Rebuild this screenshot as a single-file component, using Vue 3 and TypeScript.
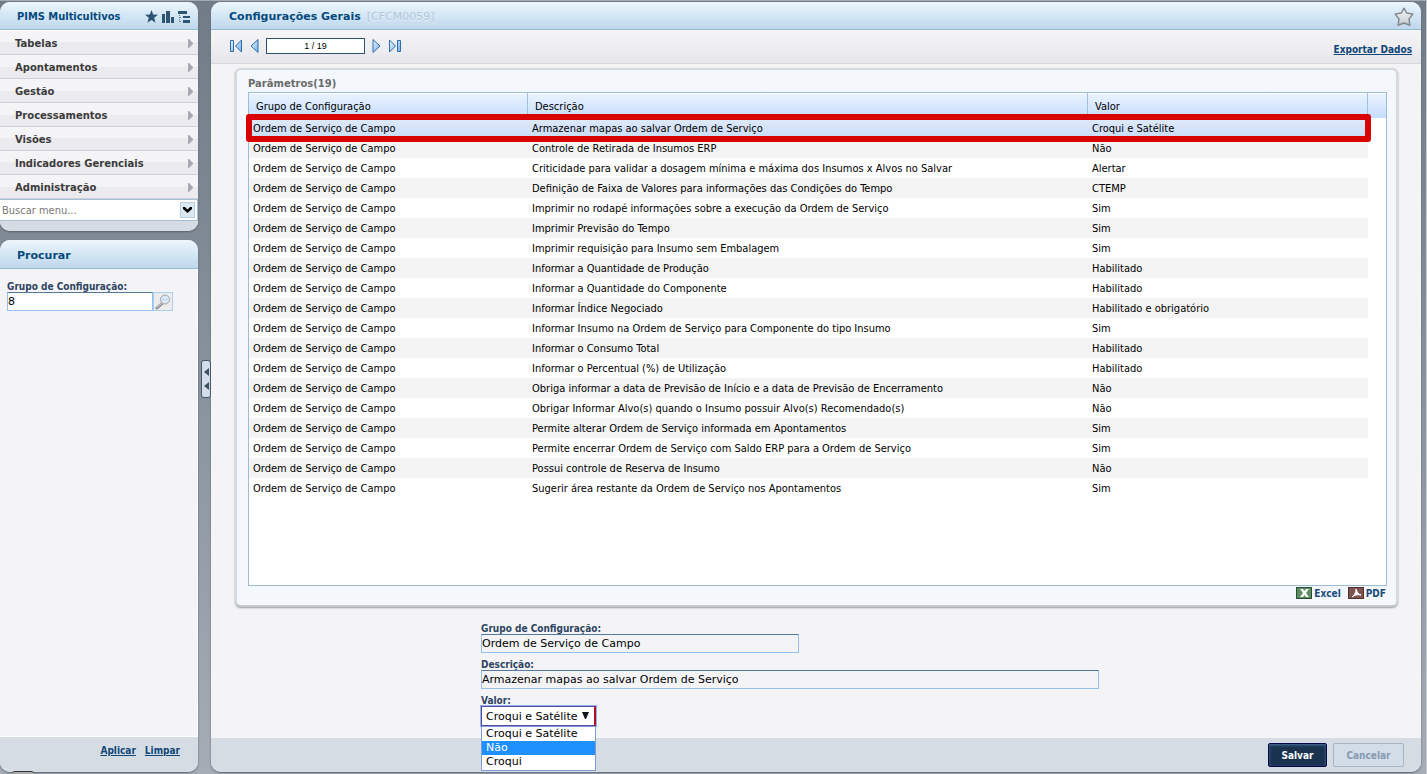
<script setup lang="ts">
import { ref } from 'vue'

interface Parametro {
  descricao: string
  valor: string
}

const menus: string[] = [
  'Tabelas',
  'Apontamentos',
  'Gestão',
  'Processamentos',
  'Visões',
  'Indicadores Gerenciais',
  'Administração',
]

const grupo = 'Ordem de Serviço de Campo'

const parametros: Parametro[] = [
  { descricao: 'Armazenar mapas ao salvar Ordem de Serviço', valor: 'Croqui e Satélite' },
  { descricao: 'Controle de Retirada de Insumos ERP', valor: 'Não' },
  { descricao: 'Criticidade para validar a dosagem mínima e máxima dos Insumos x Alvos no Salvar', valor: 'Alertar' },
  { descricao: 'Definição de Faixa de Valores para informações das Condições do Tempo', valor: 'CTEMP' },
  { descricao: 'Imprimir no rodapé informações sobre a execução da Ordem de Serviço', valor: 'Sim' },
  { descricao: 'Imprimir Previsão do Tempo', valor: 'Sim' },
  { descricao: 'Imprimir requisição para Insumo sem Embalagem', valor: 'Sim' },
  { descricao: 'Informar a Quantidade de Produção', valor: 'Habilitado' },
  { descricao: 'Informar a Quantidade do Componente', valor: 'Habilitado' },
  { descricao: 'Informar Índice Negociado', valor: 'Habilitado e obrigatório' },
  { descricao: 'Informar Insumo na Ordem de Serviço para Componente do tipo Insumo', valor: 'Sim' },
  { descricao: 'Informar o Consumo Total', valor: 'Habilitado' },
  { descricao: 'Informar o Percentual (%) de Utilização', valor: 'Habilitado' },
  { descricao: 'Obriga informar a data de Previsão de Início e a data de Previsão de Encerramento', valor: 'Não' },
  { descricao: 'Obrigar Informar Alvo(s) quando o Insumo possuir Alvo(s) Recomendado(s)', valor: 'Não' },
  { descricao: 'Permite alterar Ordem de Serviço informada em Apontamentos', valor: 'Sim' },
  { descricao: 'Permite encerrar Ordem de Serviço com Saldo ERP para a Ordem de Serviço', valor: 'Sim' },
  { descricao: 'Possui controle de Reserva de Insumo', valor: 'Não' },
  { descricao: 'Sugerir área restante da Ordem de Serviço nos Apontamentos', valor: 'Sim' },
]

const opcoes: string[] = ['Croqui e Satélite', 'Não', 'Croqui']
const destacada = ref('Não')
const selecionado = ref(0)
const busca = ref('')
const filtro = ref('8')
const pagina = ref('1 / 19')
const descricao = ref(parametros[0].descricao)
const valor = ref(parametros[0].valor)

function selecionar(i: number): void {
  selecionado.value = i
  descricao.value = parametros[i].descricao
}
</script>

<template>
  <div class="app">
    <svg width="0" height="0" class="defs" aria-hidden="true">
      <defs>
        <linearGradient id="azul" x1="0" y1="0" x2="1" y2="1">
          <stop offset="0" stop-color="#e4f2fd" />
          <stop offset="1" stop-color="#78b0ea" />
        </linearGradient>
        <linearGradient id="prata" x1="0" y1="0" x2="0" y2="1">
          <stop offset="0" stop-color="#f4f6f8" />
          <stop offset="1" stop-color="#c4cbd3" />
        </linearGradient>
      </defs>
    </svg>

    <aside class="side">
      <nav class="panel">
        <header class="head side-head">
          <h2 class="brand">PIMS Multicultivos</h2>
          <span class="tools">
            <button type="button" class="icon" aria-label="Favoritos">
              <svg width="13" height="13" viewBox="0 0 13 13"><path d="M6.5 0 8.2 4.6 13 4.8 9.2 7.8 10.6 12.7 6.5 9.9 2.4 12.7 3.8 7.8 0 4.8 4.8 4.6Z" fill="#2c5572" /></svg>
            </button>
            <button type="button" class="icon" aria-label="Gráficos">
              <svg width="12" height="12" viewBox="0 0 12 12"><path d="M0 3h3v9H0ZM4 0h4v12H4ZM9 6h3v6H9Z" fill="#2c5572" /></svg>
            </button>
            <button type="button" class="icon" aria-label="Árvore">
              <svg width="12" height="12" viewBox="0 0 12 12"><path d="M0 0h9v3H0ZM5 5h7v2H5ZM5 9h7v3H5Z" fill="#2c5572" /><path d="M1.5 4v7M2 6.500h2M2 10.500h2" stroke="#5b7c94" stroke-dasharray="1 1" fill="none" /></svg>
            </button>
          </span>
        </header>
        <ul class="menu">
          <li v-for="m in menus" :key="m">
            <a href="#" class="menu-item">
              <span>{{ m }}</span>
              <svg width="5" height="9" viewBox="0 0 5 9"><path d="M0 0h1l4 4v1L1 9H0Z" fill="#a9a9b3" /></svg>
            </a>
          </li>
        </ul>
        <div class="combo">
          <input v-model="busca" type="text" placeholder="Buscar menu..." aria-label="Buscar menu" />
          <button type="button" aria-label="Abrir lista">
            <svg width="9" height="6" viewBox="0 0 9 6"><path d="M0 0h2l2.500 2.500L7 0h2v2L4.500 6 0 2Z" fill="#000" /></svg>
          </button>
        </div>
        <div class="cap"></div>
      </nav>

      <section class="panel find">
        <header class="head side-head"><h2>Procurar</h2></header>
        <div class="find-body">
          <label for="filtro" class="label">Grupo de Configuração:</label>
          <div class="lookup">
            <input id="filtro" v-model="filtro" type="text" class="field" />
            <button type="button" aria-label="Pesquisar">
              <svg width="17" height="16" viewBox="0 0 17 16">
                <path d="M7 9.500 2 14" stroke="#8d8d8d" stroke-width="3" stroke-linecap="round" />
                <path d="M6.500 9.500 2.500 13" stroke="#dedede" stroke-linecap="round" />
                <circle cx="10" cy="5.500" r="4.500" fill="#dbe9f8" stroke="#a3a3a3" />
                <path d="M7 5.500h6" stroke="#b9d3ee" />
              </svg>
            </button>
          </div>
        </div>
        <footer class="find-foot">
          <a href="#" class="link">Aplicar</a>
          <a href="#" class="link">Limpar</a>
        </footer>
      </section>
    </aside>

    <div class="splitter">
      <button type="button" aria-label="Recolher menu">
        <svg width="5" height="22" viewBox="0 0 5 22"><path d="M5 0v8L0 4ZM5 14v8L0 18Z" fill="#3e5064" /></svg>
      </button>
    </div>

    <main class="panel main">
      <header class="head main-head">
        <h1>Configurações Gerais</h1>
        <span class="code">[CFCM0059]</span>
        <button type="button" class="icon fav" aria-label="Adicionar aos favoritos">
          <svg width="20" height="20" viewBox="0 0 20 20"><path d="M10 1.200 12.600 6 18.800 7.100 15 12 15.900 18.300 10 16 4.100 18.300 5 12 1.200 7.100 7.400 6Z" fill="url(#prata)" stroke="#86898d" stroke-width="1.500" stroke-linejoin="round" /></svg>
        </button>
      </header>

      <div class="bar">
        <div class="pager">
          <button type="button" class="icon" aria-label="Primeiro">
            <svg width="13" height="14" viewBox="0 0 13 14"><path d="M.5 1.500h3v11h-3ZM11.500 1v12L5.500 7Z" fill="url(#azul)" stroke="#2f6cab" /></svg>
          </button>
          <button type="button" class="icon" aria-label="Anterior">
            <svg width="9" height="14" viewBox="0 0 9 14"><path d="M8 .5v13L1 7Z" fill="url(#azul)" stroke="#2f6cab" /></svg>
          </button>
          <input v-model="pagina" type="text" aria-label="Registro" />
          <button type="button" class="icon" aria-label="Próximo">
            <svg width="9" height="14" viewBox="0 0 9 14"><path d="M1 .5v13L8 7Z" fill="url(#azul)" stroke="#2f6cab" /></svg>
          </button>
          <button type="button" class="icon" aria-label="Último">
            <svg width="13" height="14" viewBox="0 0 13 14"><path d="M9.500 1.500h3v11h-3ZM1.500 1v12L7.500 7Z" fill="url(#azul)" stroke="#2f6cab" /></svg>
          </button>
        </div>
        <a href="#" class="link">Exportar Dados</a>
      </div>

      <div class="content">
        <section class="group">
          <h3>Parâmetros(19)</h3>
          <div class="grid">
            <table>
              <colgroup>
                <col class="c1" />
                <col />
                <col class="c3" />
                <col class="c4" />
              </colgroup>
              <thead>
                <tr>
                  <th scope="col">Grupo de Configuração</th>
                  <th scope="col">Descrição</th>
                  <th scope="col">Valor</th>
                  <td></td>
                </tr>
              </thead>
              <tbody>
                <tr v-for="(p, i) in parametros" :key="p.descricao" :class="{ on: i === selecionado }" @click="selecionar(i)">
                  <td>{{ grupo }}</td>
                  <td>{{ p.descricao }}</td>
                  <td>{{ p.valor }}</td>
                </tr>
              </tbody>
            </table>
            <div class="marker"></div>
          </div>
          <div class="exports">
            <a href="#">
              <svg width="16" height="12" viewBox="0 0 16 12"><rect x=".5" y=".5" width="15" height="11" fill="#5c8c5f" stroke="#2b4f35" /><path d="M4 2h3l1.500 2L10 2h3l-3 4 3 4h-3L8.500 8 7 10H4l3-4Z" fill="#fff" /></svg>
              Excel
            </a>
            <a href="#">
              <svg width="16" height="12" viewBox="0 0 16 12"><rect x=".5" y=".5" width="15" height="11" fill="#7d5450" stroke="#54302f" /><path d="M8 2c1 3 2 5 5 6-3-.500-6-.500-9 2 3-2 4-5 4-8Z" fill="#fff" stroke="#fff" stroke-linejoin="round" /></svg>
              PDF
            </a>
          </div>
        </section>

        <form class="form" @submit.prevent>
          <label for="grupo" class="label">Grupo de Configuração:</label>
          <input id="grupo" type="text" class="field short" :value="grupo" readonly />
          <label for="descricao" class="label">Descrição:</label>
          <input id="descricao" type="text" class="field" :value="descricao" readonly />
          <label for="valor" class="label">Valor:</label>
          <div class="select">
            <select id="valor" v-model="valor">
              <option v-for="o in opcoes" :key="o">{{ o }}</option>
            </select>
            <svg class="arrow" width="7" height="7" viewBox="0 0 7 7"><path d="M0 0h7L4 7H3Z" fill="#111" /></svg>
            <ul class="options" role="listbox" aria-label="Valor">
              <li v-for="o in opcoes" :key="o" role="option" :aria-selected="o === destacada" :class="{ hot: o === destacada }" @mouseenter="destacada = o" @click="valor = o">{{ o }}</li>
            </ul>
          </div>
        </form>
      </div>

      <footer class="main-foot">
        <button type="button" class="btn primary">Salvar</button>
        <button type="button" class="btn" disabled>Cancelar</button>
      </footer>
    </main>

    <div class="peek"></div>
  </div>
</template>

<style>
html,
body {
  margin: 0;
  background: #a4abb4;
}
</style>

<style scoped>
.app,
.app * {
  box-sizing: border-box;
}

.app {
  position: relative;
  display: flex;
  height: 100vh;
  min-height: 700px;
  padding: 1px 5px 2px 0;
  border-right: 1px solid #c9cccf;
  border-top: 1px solid #a3aab0;
  background: linear-gradient(#727c88, #7f8994 30%, #8e98a3 60%, #a5acb6);
  font-family: 'DejaVu Sans', Verdana, sans-serif;
  font-size: 11px;
  overflow: hidden;
}

.defs {
  position: absolute;
}

.peek {
  position: absolute;
  left: 12px;
  bottom: 0;
  width: 22px;
  height: 3px;
  border-top: 1px solid #333;
  border-radius: 11px 11px 0 0;
  background: #a9aca8;
}

button,
input,
select {
  font: inherit;
  margin: 0;
  padding: 0;
}

h1,
h2,
h3,
ul {
  margin: 0;
  padding: 0;
}

ul {
  list-style: none;
}

svg {
  display: block;
  flex: none;
}

.icon {
  border: 0;
  background: none;
}

.panel {
  display: flex;
  flex-direction: column;
  border-radius: 10px;
  background: #f4f4f7;
  box-shadow: 0 1px 2px #59636e;
}

.head {
  display: flex;
  align-items: center;
  flex: none;
  height: 28px;
  border-bottom: 1px solid #92bdd0;
  border-radius: 10px 10px 0 0;
  background: linear-gradient(#edf6fc, #d6e8f5 45%, #bfd7ec);
  color: #064a7d;
}

h1,
h2 {
  font-size: 11px;
  font-weight: bold;
}

.side {
  display: flex;
  flex-direction: column;
  gap: 9px;
  flex: none;
  width: 198px;
}

.side-head {
  padding: 2px 8px 0 17px;
  justify-content: space-between;
}

.brand,
.label,
.link {
  font-family: 'DejaVu Sans Condensed', 'DejaVu Sans', sans-serif;
  font-stretch: condensed;
}

.tools {
  display: flex;
  align-items: center;
  gap: 4px;
}

.menu {
  border-top: 1px solid #fff;
}

.menu-item {
  display: flex;
  align-items: center;
  justify-content: space-between;
  height: 24px;
  padding: 2px 5px 0 15px;
  border-bottom: 1px solid #cfcfde;
  background: linear-gradient(#f4f4f6 50%, #ebebef 50%);
  color: #3b3b3b;
  font-size: 10px;
  font-weight: bold;
  text-decoration: none;
}

.combo {
  display: flex;
  align-items: center;
  height: 22px;
  padding: 0 2px;
  border: 1px solid #a3bfd4;
  border-left: 0;
  background: #fff;
}

.combo input {
  flex: 1;
  min-width: 0;
  border: 0;
  outline: 0;
  font-family: 'DejaVu Sans Condensed', 'DejaVu Sans', sans-serif;
  font-stretch: condensed;
}

.combo input::placeholder {
  color: #777;
}

.combo button {
  display: grid;
  place-items: center;
  width: 15px;
  height: 16px;
  border: 1px solid #b5cfe0;
  background: #dce9f2;
}

.cap {
  height: 10px;
  border-radius: 0 0 10px 10px;
  background: #d6dce4;
}

.find {
  flex: 1;
}

.find .head {
  height: 29px;
}

.find-body {
  flex: 1;
  padding: 12px 7px;
  border-right: 1px solid #fff;
  border-bottom: 1px solid #fff;
}

.label {
  display: block;
  height: 11px;
  line-height: 11px;
  color: #2f4562;
  font-size: 10px;
  font-weight: bold;
}

.field {
  display: block;
  width: 100%;
  height: 19px;
  padding: 0;
  border: 1px solid #94c1f2;
  border-top-color: #56789e;
  border-radius: 0;
  background: #fff;
  color: #000;
  outline: 0;
}

.lookup {
  display: flex;
  width: 166px;
}

.lookup button {
  display: grid;
  place-items: center;
  flex: none;
  width: 20px;
  border: 1px solid #a9cdf3;
  background: #ececec;
}

.find-foot {
  display: flex;
  gap: 9px;
  justify-content: flex-end;
  height: 35px;
  padding: 8px 18px 0 0;
  border-radius: 0 0 10px 10px;
  background: #d6dce4;
}

.link {
  color: #104777;
  font-size: 10px;
  font-weight: bold;
}

.splitter {
  display: flex;
  align-items: center;
  flex: none;
  width: 13px;
  padding-left: 3px;
}

.splitter button {
  display: grid;
  place-items: center;
  width: 10px;
  height: 38px;
  margin-bottom: 16px;
  border: 1px solid #44566a;
  border-radius: 3px;
  background: #d3deea;
}

.main {
  flex: 1;
  min-width: 0;
}

.main-head {
  gap: 6px;
  padding: 2px 7px 0 18px;
}

.code {
  color: #b0c6db;
  text-shadow: 0 1px #e9f2fa;
}

.fav {
  margin-left: auto;
}

.bar {
  display: flex;
  justify-content: space-between;
  flex: none;
  height: 34px;
  padding: 0 9px 0 19px;
  border-bottom: 1px solid #d6d5da;
  background: linear-gradient(#f5f5f7, #e7e6eb);
}

.bar .link {
  padding-top: 14px;
}

.pager {
  display: flex;
  align-items: center;
  height: 31px;
  gap: 7px;
}

.pager input {
  width: 99px;
  height: 16px;
  border: 1px solid #31506f;
  font-family: 'Liberation Sans', Arial, sans-serif;
  font-size: 9px;
  text-align: center;
}

.content {
  flex: 1;
  min-height: 0;
  display: flex;
  flex-direction: column;
  padding: 4px 23px 12px 24px;
}

.group {
  display: flex;
  flex-direction: column;
  flex: 1;
  min-height: 0;
  padding: 7px 9px 6px 11px;
  border: 2px solid #d5d8dc;
  border-bottom-color: #c6c9ce;
  border-radius: 6px;
  background: #f4f8fd;
  box-shadow: 0 1px 2px #999;
}

h3 {
  height: 15px;
  line-height: 13px;
  color: #6a6a6a;
  font-size: 10px;
  font-weight: bold;
}

.grid {
  position: relative;
  flex: 1;
  min-height: 0;
  border: 1px solid #9fbcd6;
  background: #fff;
}

table {
  width: 100%;
  table-layout: fixed;
  border-collapse: separate;
  border-spacing: 0;
  font-family: 'DejaVu Sans Condensed', 'DejaVu Sans', sans-serif;
  font-stretch: condensed;
}

.c1 {
  width: 279px;
}

.c3 {
  width: 280px;
}

.c4 {
  width: 18px;
}

thead th,
thead td {
  height: 25px;
  padding: 2px 7px 0;
  border-right: 1px solid #a3bfda;
  background: linear-gradient(#fff 1px, #e9f3ff 1px, #c6ddfd);
  font-weight: normal;
  text-align: left;
}

thead td {
  border-right: 0;
}

tbody td {
  height: 20px;
  padding: 0 4px;
  overflow: hidden;
  white-space: nowrap;
}

tbody tr:nth-child(even) td {
  background: #f3f3f3;
}

tbody tr.on td {
  background: linear-gradient(#e0eafb, #c9dcf7);
}

.marker {
  position: absolute;
  top: 21px;
  left: -3px;
  right: 15px;
  height: 28px;
  border: 6px solid #d90000;
  border-radius: 3px;
  pointer-events: none;
}

.exports {
  display: flex;
  justify-content: flex-end;
  gap: 7px;
  padding: 1px 1px 0 0;
}

.exports a {
  display: flex;
  align-items: center;
  gap: 2px;
  color: #1b4b78;
  font-family: 'DejaVu Sans Condensed', 'DejaVu Sans', sans-serif;
  font-stretch: condensed;
  font-size: 10px;
  font-weight: bold;
  text-decoration: none;
}

.form {
  flex: none;
  width: 618px;
  margin: 16px 0 0 246px;
}

.form .field {
  margin-bottom: 6px;
  background: #f4f4f7;
}

.form .short {
  width: 318px;
}

.select {
  position: relative;
  width: 115px;
  height: 20px;
}

select {
  display: block;
  width: 100%;
  height: 100%;
  padding: 0 4px;
  appearance: none;
  border: 1px solid #5c4ba0;
  border-right: 2px solid #b30f24;
  border-radius: 0;
  background: #fff;
  color: #000;
  outline: 1px solid #91b2ec;
}

.arrow {
  position: absolute;
  top: 6px;
  right: 7px;
  pointer-events: none;
}

.options {
  position: absolute;
  z-index: 2;
  top: 100%;
  left: 0;
  right: 0;
  border: 1px solid #7d9cd8;
  background: #fff;
  padding-bottom: 1px;
}

.options li {
  height: 14px;
  padding: 0 4px;
  line-height: 14px;
}

.options .hot {
  background: #1e90ff;
  color: #fff;
}

.main-foot {
  display: flex;
  align-items: center;
  justify-content: flex-end;
  gap: 6px;
  flex: none;
  height: 34px;
  padding-right: 17px;
  border-radius: 0 0 10px 10px;
  background: #d6dce4;
}

.btn {
  width: 71px;
  height: 24px;
  border: 1px solid #a7b4c2;
  border-radius: 2px;
  background: #d2dde9;
  color: #8799b0;
  font-family: 'DejaVu Sans Condensed', 'DejaVu Sans', sans-serif;
  font-stretch: condensed;
  font-size: 10px;
  font-weight: bold;
}

.primary {
  width: 59px;
  border-color: #07074e;
  background: #19334f;
  box-shadow: inset 0 1px 3px #4f74a2;
  color: #fff;
}
</style>
